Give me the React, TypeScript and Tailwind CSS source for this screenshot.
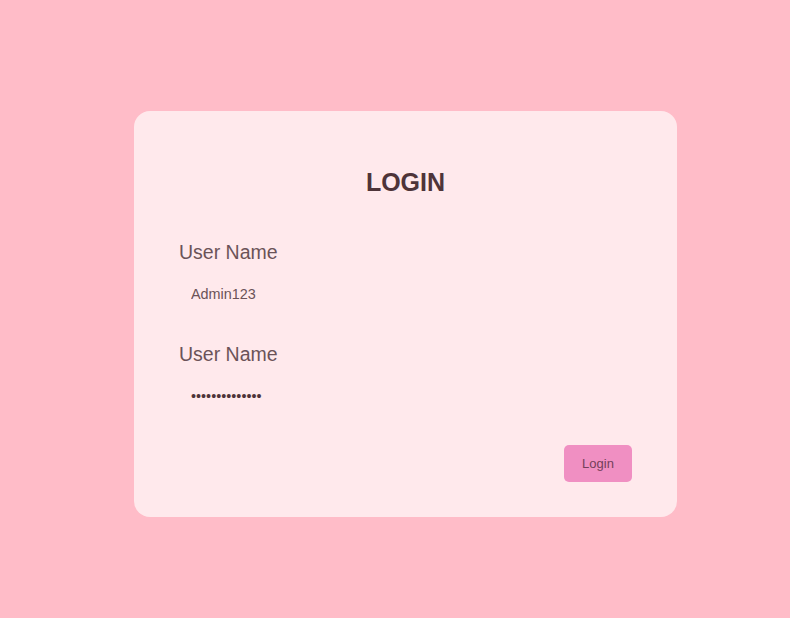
import React from "react";

export default function App() {
  return (
    <div className="min-h-[618px] w-full bg-[#ffbcc8] pt-[111px] pl-[134px] pb-[101px] font-['Liberation_Sans',Arial,sans-serif]">
      <div className="w-[543px] rounded-[16px] bg-[#ffe9ec] px-[45px] pt-[56px] pb-[35px] flex flex-col">
        <h1 className="text-center text-[25px] leading-[30px] font-bold text-[#4e3439]">LOGIN</h1>
        <label className="mt-[43px] text-[19.5px] leading-[24px] text-[#6b5358]">User Name</label>
        <input
          readOnly
          value="Admin123"
          className="mt-[10px] h-[40px] w-full bg-transparent px-[12px] text-[14.4px] text-[#6b5358] outline-none border-0 font-['Liberation_Sans',Arial,sans-serif]"
        />
        <label className="mt-[28px] text-[19.5px] leading-[24px] text-[#6b5358]">User Name</label>
        <input
          readOnly
          type="password"
          value="abcdefghijklmn"
          className="mt-[10px] h-[40px] w-full bg-transparent px-[12px] text-[14.4px] text-[#4e3439] outline-none border-0 font-['Liberation_Sans',Arial,sans-serif]"
        />
        <div className="mt-[29px] flex justify-end">
          <button className="h-[37px] w-[68px] rounded-[5px] bg-[#f08fc2] text-[13px] text-[#74405a]">
            Login
          </button>
        </div>
      </div>
    </div>
  );
}
